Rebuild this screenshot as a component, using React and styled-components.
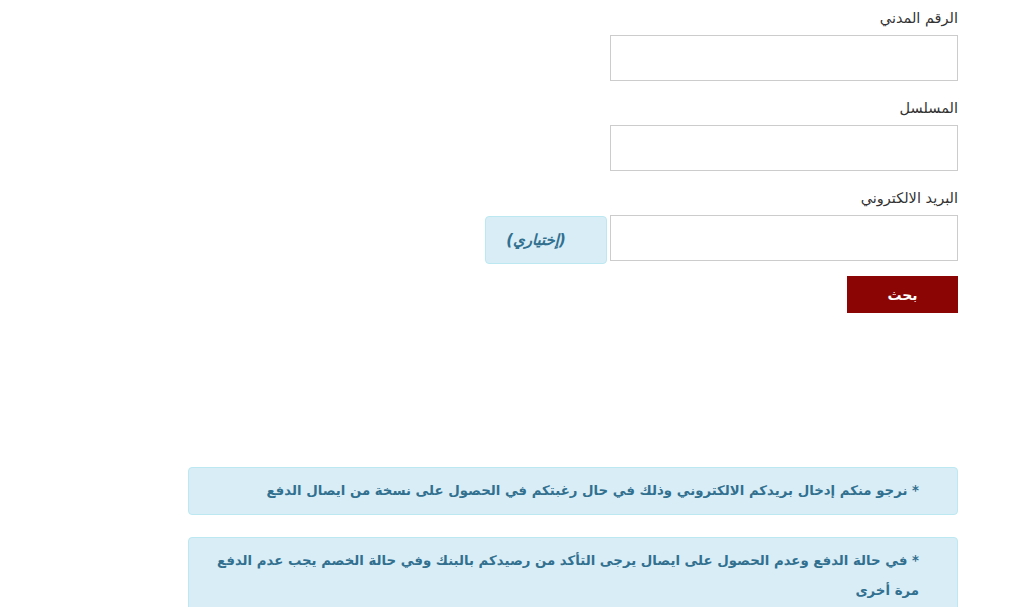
import React from "react"
import styled, { createGlobalStyle } from "styled-components"

const Global = createGlobalStyle`
    body {
        margin: 0;
        background: #fff;
        font-family: "DejaVu Sans", sans-serif;
        color: #333;
    }
`

const Page = styled.div`
    direction: rtl;
    padding: 8px 66px 0 188px;
`

const Form = styled.div`
    display: flex;
    flex-direction: column;
    align-items: flex-start;
`

const Group = styled.div`
    margin-bottom: 17px;
`

const Label = styled.label`
    display: block;
    font-size: 14.5px;
    line-height: 20px;
    margin-bottom: 7px;
`

const Row = styled.div`
    display: flex;
    align-items: flex-start;
    gap: 3px;
    height: 46px;
`

const Input = styled.input`
    display: block;
    width: 348px;
    height: 46px;
    box-sizing: border-box;
    border: 1px solid #ccc;
    background: #fff;
    margin: 0;
`

const Addon = styled.span`
    width: 122px;
    height: 48px;
    margin-top: 1px;
    padding-right: 20px;
    box-sizing: border-box;
    display: flex;
    align-items: center;
    justify-content: center;
    background: #d9edf7;
    border: 1px solid #bce8f1;
    border-radius: 4px;
    color: #31708f;
    font-weight: bold;
    font-style: italic;
    font-size: 15px;
`

const Button = styled.button`
    width: 111px;
    height: 37px;
    margin-top: -2px;
    border: none;
    background: #8b0505;
    color: #fff;
    font-family: inherit;
    font-weight: bold;
    font-size: 14px;
`

const Notes = styled.div`
    margin-top: 154px;
    display: flex;
    flex-direction: column;
    gap: 22px;
`

const Alert = styled.div`
    background: #d9edf7;
    border: 1px solid #bce8f1;
    border-radius: 4px;
    color: #31708f;
    font-weight: bold;
    font-size: 13.3px;
    line-height: 30px;
    padding: 8px 38px 8px 10px;
`

export default function App() {
    return (
        <Page>
            <Global />
            <Form>
                <Group>
                    <Label>الرقم المدني</Label>
                    <Input type="text" />
                </Group>
                <Group>
                    <Label>المسلسل</Label>
                    <Input type="text" />
                </Group>
                <Group>
                    <Label>البريد الالكتروني</Label>
                    <Row>
                        <Input type="text" />
                        <Addon>(إختياري)</Addon>
                    </Row>
                </Group>
                <Button>بحث</Button>
            </Form>
            <Notes>
                <Alert>* نرجو منكم إدخال بريدكم الالكتروني وذلك في حال رغبتكم في الحصول على نسخة من ايصال الدفع</Alert>
                <Alert>* في حالة الدفع وعدم الحصول على ايصال يرجى التأكد من رصيدكم بالبنك وفي حالة الخصم يجب عدم الدفع مرة أخرى</Alert>
            </Notes>
        </Page>
    )
}
